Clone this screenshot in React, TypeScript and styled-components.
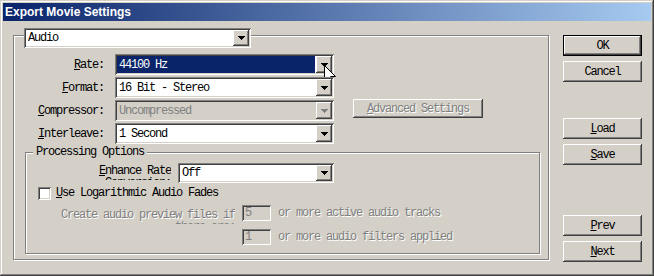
import React from "react";
import styled, { createGlobalStyle } from "styled-components";

const face = "#d4d0c8";
const shadow = "#808080";
const dark = "#404040";

const GlobalStyle = createGlobalStyle`
  html, body {
    margin: 0;
    padding: 0;
    background: ${face};
  }
`;

const raised = `
  box-shadow: inset -1px -1px 0 ${dark}, inset 1px 1px 0 #fff,
    inset -2px -2px 0 ${shadow}, inset 2px 2px 0 ${face};
`;
const sunken = `
  box-shadow: inset 1px 1px 0 ${shadow}, inset -1px -1px 0 #fff,
    inset 2px 2px 0 ${dark}, inset -2px -2px 0 ${face};
`;
const etched = `
  border: 1px solid ${shadow};
  box-shadow: 1px 1px 0 #fff, inset 1px 1px 0 #fff;
`;

const Window = styled.div`
  width: 654px;
  height: 276px;
  box-sizing: border-box;
  padding: 3px;
  display: flex;
  flex-direction: column;
  background: ${face};
  box-shadow: inset -1px -1px 0 ${dark}, inset 1px 1px 0 ${face},
    inset -2px -2px 0 ${shadow}, inset 2px 2px 0 #fff;
  font-family: "Liberation Mono", "DejaVu Sans Mono", monospace;
  font-size: 12px;
  letter-spacing: -1.2px;
  color: #000;
`;

const TitleBar = styled.div`
  height: 18px;
  display: flex;
  align-items: center;
  padding-left: 2px;
  background: linear-gradient(to right, #0a246a, #a6caf0);
  color: #fff;
  font-family: "Liberation Sans", Arial, sans-serif;
  font-weight: bold;
  font-size: 12px;
  letter-spacing: 0;
`;

const Body = styled.div`
  display: flex;
  padding: 14px 0 0 10px;
`;

const MainGroup = styled.div`
  width: 536px;
  height: 225px;
  box-sizing: border-box;
  display: flex;
  flex-direction: column;
  ${etched}
`;

const Combo = styled.div<{ $width: number; $height?: number; $ml?: number }>`
  position: relative;
  width: ${(p) => p.$width}px;
  height: ${(p) => p.$height ?? 20}px;
  margin-left: ${(p) => p.$ml ?? 0}px;
  box-sizing: border-box;
  padding: 2px;
  display: flex;
  flex-shrink: 0;
  background: #fff;
  ${sunken}
`;

const AudioCombo = styled(Combo)`
  margin-top: -8px;
  margin-left: 10px;
`;

const Field = styled.div<{ $selected?: boolean; $disabled?: boolean }>`
  flex: 1;
  display: flex;
  align-items: center;
  padding-left: 2px;
  margin-right: ${(p) => (p.$selected ? 1 : 0)}px;
  white-space: nowrap;
  overflow: hidden;
  background: ${(p) => (p.$selected ? "#0a246a" : p.$disabled ? face : "#fff")};
  color: ${(p) => (p.$selected ? "#fff" : p.$disabled ? shadow : "#000")};
`;

const DropButton = styled.div`
  width: 16px;
  display: flex;
  align-items: center;
  justify-content: center;
  background: ${face};
  ${raised}
`;

const Arrow = ({ disabled }: { disabled?: boolean }) => (
  <svg width="7" height="4" viewBox="0 0 7 4">
    <path
      d="M0 0h7v1H0zM1 1h5v1H1zM2 2h3v1H2zM3 3h1v1H3z"
      fill={disabled ? shadow : "#000"}
    />
  </svg>
);

const Cursor = styled.svg`
  position: absolute;
  left: 209px;
  top: 11px;
`;

const Select = ({
  value,
  width,
  height,
  ml,
  selected,
  disabled,
  pointer,
}: {
  value: string;
  width: number;
  height?: number;
  ml?: number;
  selected?: boolean;
  disabled?: boolean;
  pointer?: boolean;
}) => (
  <Combo $width={width} $height={height} $ml={ml}>
    <Field $selected={selected} $disabled={disabled}>
      {value}
    </Field>
    <DropButton>
      <Arrow disabled={disabled} />
    </DropButton>
    {pointer && (
      <Cursor width="12" height="20" viewBox="0 0 12 20">
        <path
          d="M0.5 0.5V16.5L4.5 12.5L7.5 19L9.5 18L6.6 11.5H11.5Z"
          fill="#fff"
          stroke="#000"
          strokeWidth="1"
          strokeLinejoin="miter"
        />
      </Cursor>
    )}
  </Combo>
);

const Form = styled.div`
  margin-top: 6px;
  display: grid;
  grid-template-columns: 90px 219px auto;
  grid-auto-rows: 21px;
  column-gap: 11px;
  row-gap: 2px;
`;

const FieldLabel = styled.div<{ $disabled?: boolean }>`
  grid-column: 1;
  align-self: center;
  text-align: right;
  white-space: nowrap;
  color: ${(p) => (p.$disabled ? shadow : "#000")};
`;

const PushButton = styled.div<{ $default?: boolean; $disabled?: boolean }>`
  box-sizing: border-box;
  height: 21px;
  display: flex;
  align-items: center;
  justify-content: center;
  white-space: nowrap;
  background: ${face};
  border: ${(p) => (p.$default ? "1px solid #000" : "none")};
  color: ${(p) => (p.$disabled ? shadow : "#000")};
  text-shadow: ${(p) => (p.$disabled ? "1px 1px 0 #fff" : "none")};
  ${raised}
`;

const AdvancedButton = styled(PushButton)`
  grid-column: 3;
  grid-row: 3;
  width: 130px;
  height: 19px;
  margin-left: 8px;
  margin-top: -1px;
`;

const ProcGroup = styled.div`
  width: 515px;
  height: 102px;
  box-sizing: border-box;
  margin: 8px 0 0 11px;
  display: flex;
  flex-direction: column;
  ${etched}
`;

const Caption = styled.div`
  align-self: flex-start;
  margin: -7px 0 0 7px;
  padding: 0 3px;
  line-height: 12px;
  background: ${face};
`;

const Row = styled.div<{ $mt: number }>`
  display: flex;
  align-items: flex-start;
  margin-top: ${(p) => p.$mt}px;
`;

const ClippedLabel = styled.div<{
  $width: number;
  $height: number;
  $pt?: number;
  $disabled?: boolean;
}>`
  width: ${(p) => p.$width}px;
  height: ${(p) => p.$height}px;
  box-sizing: border-box;
  padding-top: ${(p) => p.$pt ?? 2}px;
  overflow: hidden;
  text-align: right;
  line-height: 12px;
  color: ${(p) => (p.$disabled ? shadow : "#000")};
  text-shadow: ${(p) => (p.$disabled ? "1px 1px 0 #fff" : "none")};
`;

const CheckBox = styled.div`
  width: 13px;
  height: 13px;
  margin-left: 12px;
  background: #fff;
  ${sunken}
`;

const CheckText = styled.div`
  margin-left: 5px;
  line-height: 13px;
`;

const EditBox = styled.div`
  width: 29px;
  height: 16px;
  box-sizing: border-box;
  margin-left: 7px;
  padding-left: 3px;
  line-height: 16px;
  color: ${shadow};
  background: ${face};
  ${sunken}
`;

const Hint = styled.div`
  margin-left: 7px;
  line-height: 16px;
  color: ${shadow};
  text-shadow: 1px 1px 0 #fff;
  white-space: nowrap;
`;

const ButtonColumn = styled.div`
  width: 79px;
  margin-left: 14px;
  display: flex;
  flex-direction: column;
`;

const Spaced = styled(PushButton)<{ $mt: number }>`
  margin-top: ${(p) => p.$mt}px;
`;

export default function App() {
  return (
    <>
      <GlobalStyle />
      <Window>
        <TitleBar>Export Movie Settings</TitleBar>
        <Body>
          <MainGroup>
            <AudioCombo $width={227}>
              <Field>Audio</Field>
              <DropButton>
                <Arrow />
              </DropButton>
            </AudioCombo>

            <Form>
              <FieldLabel>
                <u>R</u>ate:
              </FieldLabel>
              <Select value="44100 Hz" width={219} height={21} selected pointer />
              <div />
              <FieldLabel>
                <u>F</u>ormat:
              </FieldLabel>
              <Select value="16 Bit - Stereo" width={219} height={21} />
              <div />
              <FieldLabel>
                <u>C</u>ompressor:
              </FieldLabel>
              <Select value="Uncompressed" width={219} height={21} disabled />
              <AdvancedButton $disabled>
                <u>A</u>dvanced Settings
              </AdvancedButton>
              <FieldLabel>
                <u>I</u>nterleave:
              </FieldLabel>
              <Select value="1 Second" width={219} height={21} />
            </Form>

            <ProcGroup>
              <Caption>Processing Options</Caption>
              <Row $mt={5}>
                <ClippedLabel $width={145} $height={17}>
                  <u>E</u>nhance Rate
                  <br />
                  Conversion:
                </ClippedLabel>
                <Select value="Off" width={156} ml={7} />
              </Row>
              <Row $mt={4}>
                <CheckBox />
                <CheckText>
                  <u>U</u>se Logarithmic Audio Fades
                </CheckText>
              </Row>
              <Row $mt={5}>
                <ClippedLabel $width={209} $height={19} $pt={4} $disabled>
                  Create audio preview files if
                  <br />
                  there are:
                </ClippedLabel>
                <EditBox>5</EditBox>
                <Hint>or more active audio tracks</Hint>
              </Row>
              <Row $mt={5}>
                <ClippedLabel $width={209} $height={16} />
                <EditBox>1</EditBox>
                <Hint>or more audio filters applied</Hint>
              </Row>
            </ProcGroup>
          </MainGroup>

          <ButtonColumn>
            <PushButton $default>OK</PushButton>
            <Spaced $mt={5}>Cancel</Spaced>
            <Spaced $mt={36}>
              <u>L</u>oad
            </Spaced>
            <Spaced $mt={5}>
              <u>S</u>ave
            </Spaced>
            <Spaced $mt={50}>
              <u>P</u>rev
            </Spaced>
            <Spaced $mt={5}>
              <u>N</u>ext
            </Spaced>
          </ButtonColumn>
        </Body>
      </Window>
    </>
  );
}
